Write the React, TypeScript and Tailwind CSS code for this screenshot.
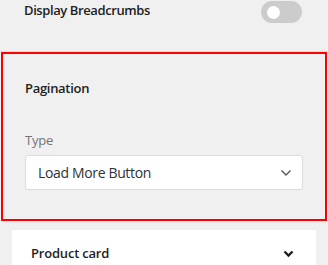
import React from "react";

export default function App() {
  return (
    <div
      className="w-[328px] h-[265px] bg-[#f0f0f0] overflow-hidden text-[#1e1e1e]"
      style={{ fontFamily: '"Open Sans", "Noto Sans", sans-serif' }}
    >
      <div className="flex items-center justify-between h-[24px] pl-[24px] pr-[26px]">
        <span className="text-[13px] font-semibold leading-none tracking-[-0.4px] pb-[4px]">Display Breadcrumbs</span>
        <div className="w-[41px] h-[22px] rounded-full bg-[#cccccc] flex items-center pl-[6px]">
          <div className="w-[13px] h-[13px] rounded-full bg-white" />
        </div>
      </div>
      <div className="mt-[27px] border-t border-[#dddddd]">
        <div className="mx-[1px] border-2 border-[#ff0000] h-[169px] px-[22px] pt-[22px]">
          <div className="text-[13px] font-semibold leading-[24px] tracking-[-0.3px]">Pagination</div>
          <div className="mt-[30px] text-[13px] text-[#757575] leading-[20px] tracking-[-0.2px]">Type</div>
          <div className="mt-[5px] h-[35px] bg-white border border-[#dcdcde] rounded-[3px] flex items-center justify-between pl-[12px] pr-[10px]">
            <span className="text-[14px] text-[#2c3338] tracking-[-0.35px]">Load More Button</span>
            <svg width="12" height="8" viewBox="0 0 12 8" fill="none">
              <path d="M1.5 1.5 L6 6 L10.5 1.5" stroke="#555" strokeWidth="1.4" />
            </svg>
          </div>
        </div>
      </div>
      <div className="mt-[9px] mx-[12px] w-[304px] h-[40px] bg-white flex items-center justify-between pl-[19px] pr-[22px] pt-[8px]">
        <span className="text-[13px] font-semibold tracking-[-0.2px]">Product card</span>
        <svg width="11" height="8" viewBox="0 0 11 8" fill="none">
          <path d="M1.5 1.5 L5.5 5.5 L9.5 1.5" stroke="#1e1e1e" strokeWidth="2.4" />
        </svg>
      </div>
    </div>
  );
}
